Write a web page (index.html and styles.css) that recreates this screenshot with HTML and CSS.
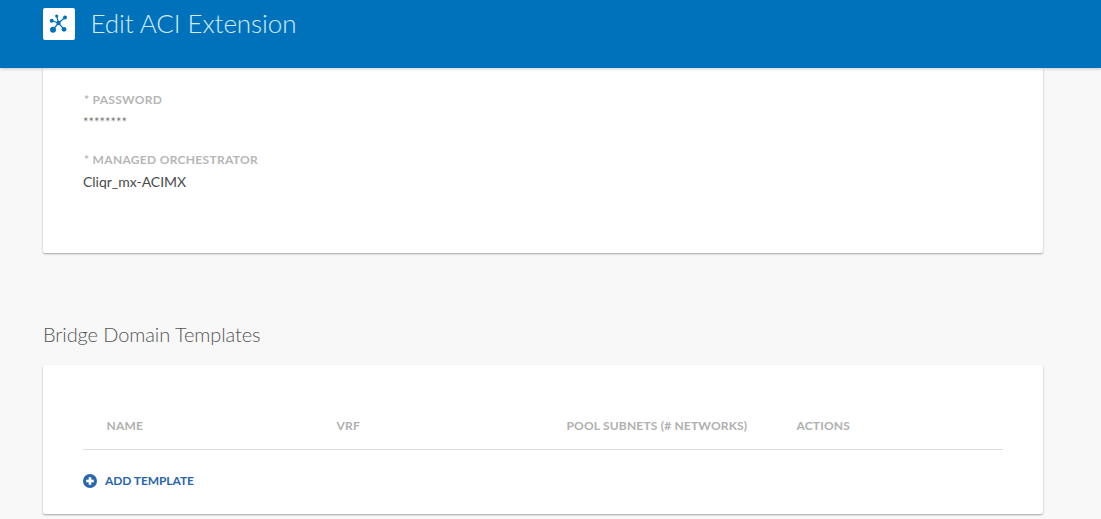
FILE: index.html
```html
<!DOCTYPE html>
<html lang="en">
<head>
    <meta charset="UTF-8">
    <title>Edit ACI Extension</title>
    <link rel="stylesheet" href="styles.css">
</head>
<body>
    <header class="page-header">
        <span class="logo-box">
            <svg class="logo-icon" viewBox="0 0 22 22" width="22" height="22">
                <g stroke="#0072bc" stroke-width="1.2">
                    <line x1="10.5" y1="10" x2="3.7" y2="7.7"/>
                    <line x1="10.5" y1="10" x2="8.7" y2="3"/>
                    <line x1="10.5" y1="10" x2="17" y2="4.5"/>
                    <line x1="10.5" y1="10" x2="16" y2="16.3"/>
                    <line x1="10.5" y1="10" x2="5" y2="16.7"/>
                </g>
                <g fill="#0072bc">
                    <circle cx="10.5" cy="10" r="2.2"/>
                    <circle cx="3.7" cy="7.7" r="2"/>
                    <circle cx="8.7" cy="3" r="1.6"/>
                    <circle cx="17" cy="4.5" r="2"/>
                    <circle cx="16" cy="16.3" r="2.4"/>
                    <circle cx="5" cy="16.7" r="3"/>
                </g>
            </svg>
        </span>
        <h1 class="page-title">Edit ACI Extension</h1>
    </header>

    <main class="content">
        <section class="card card-form">
            <div class="field field-password">
                <div class="field-label">* PASSWORD</div>
                <div class="field-value field-secret">********</div>
            </div>
            <div class="field">
                <div class="field-label">* MANAGED ORCHESTRATOR</div>
                <div class="field-value">Cliqr_mx-ACIMX</div>
            </div>
        </section>

        <h2 class="section-title">Bridge Domain Templates</h2>

        <section class="card card-table">
            <div class="table-head">
                <div>NAME</div>
                <div>VRF</div>
                <div>POOL SUBNETS (# NETWORKS)</div>
                <div>ACTIONS</div>
            </div>
            <a class="add-link" href="#">
                <svg viewBox="0 0 14 14" width="14" height="14">
                    <circle cx="7" cy="7" r="7" fill="#2a66ad"/>
                    <rect x="3.2" y="5.7" width="7.6" height="2.6" fill="#fff"/>
                    <rect x="5.7" y="3.2" width="2.6" height="7.6" fill="#fff"/>
                </svg>
                ADD TEMPLATE
            </a>
        </section>
    </main>
</body>
</html>
```

FILE: styles.css
```css
* {
    box-sizing: border-box;
}
html, body {
    height: 519px;
    overflow: hidden;
}
body {
    margin: 0;
    background: #f8f8f8;
    font-family: Lato, sans-serif;
    color: #444;
}
.page-header {
    position: relative;
    z-index: 2;
    height: 68px;
    padding: 8px 0 0 43px;
    display: flex;
    align-items: flex-start;
    background: #0072bc;
    box-shadow: 0 1px 3px rgba(0,0,0,0.2);
}
.logo-box {
    width: 32px;
    height: 32px;
    border-radius: 2px;
    background: white;
    display: flex;
    align-items: center;
    justify-content: center;
}
.page-title {
    margin: -1px 0 0 15.5px;
    font-size: 26px;
    line-height: 32px;
    font-weight: 300;
    letter-spacing: -0.08px;
    color: #d4ebf8;
}
.content {
    padding: 0 58px 0 43px;
}
.card {
    background: white;
    border-radius: 2px;
    box-shadow: 0 1px 2px rgba(0,0,0,0.35);
    padding: 0 40px;
}
.card-form {
    height: 185px;
    padding-top: 24px;
}
.field-password {
    margin-bottom: 21px;
}
.field-label {
    font-size: 12px;
    line-height: 16px;
    font-weight: 700;
    letter-spacing: 0.3px;
    color: #b6b6b6;
    padding-left: 1px;
}
.field-value {
    margin-top: 4px;
    font-size: 14px;
    line-height: 20px;
    letter-spacing: -0.02px;
    color: #4a4a4a;
}
.field-secret {
    margin-top: 5px;
    font-size: 13px;
    line-height: 18px;
    color: #777;
}
.section-title {
    margin: 69px 0 19px;
    font-size: 20px;
    line-height: 24px;
    font-weight: 300;
    letter-spacing: -0.09px;
    color: #555;
}
.card-table {
    height: 149px;
    padding-top: 52px;
}
.table-head {
    display: grid;
    grid-template-columns: repeat(4, 230px);
    padding: 0 0 14px 23.5px;
    border-bottom: 1px solid #ddd;
    font-size: 12px;
    line-height: 18px;
    font-weight: 700;
    letter-spacing: 0.18px;
    color: #b0b0b0;
}
.add-link {
    margin-top: 22px;
    display: flex;
    align-items: center;
    gap: 8px;
    font-size: 12px;
    line-height: 18px;
    font-weight: 700;
    letter-spacing: -0.08px;
    color: #2a66ad;
    text-decoration: none;
}
```
